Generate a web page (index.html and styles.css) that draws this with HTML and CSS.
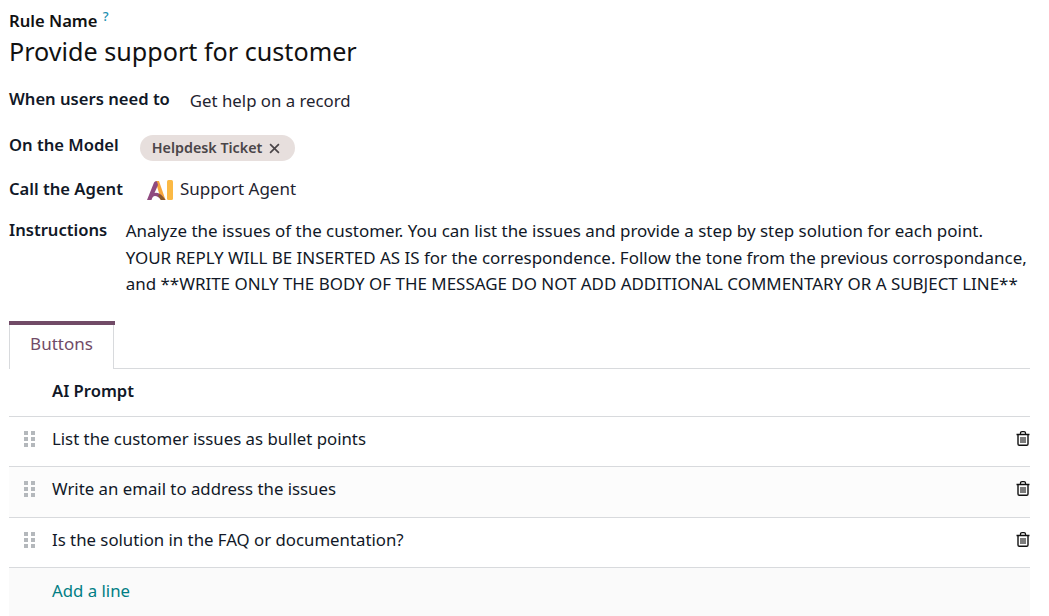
FILE: index.html
```html
<!DOCTYPE html>
<html lang="en">

<head>
    <meta charset="UTF-8">
    <title>Rule form</title>
    <link rel="stylesheet" href="styles.css">
</head>

<body>
    <div class="sheet">
        <div class="title-block">
            <label class="title-label">Rule Name <sup class="help">?</sup></label>
            <h1 class="title">Provide support for customer</h1>
        </div>

        <div class="field field-when">
            <span class="field-label">When users need to</span>
            <span class="field-value">Get help on a record</span>
        </div>

        <div class="field field-model">
            <span class="field-label">On the Model</span>
            <span class="tag">Helpdesk Ticket
                <svg class="tag-x" viewBox="0 0 10 10" width="11" height="11">
                    <path d="M1 1L9 9M9 1L1 9" stroke="#4a4548" stroke-width="1.5" fill="none" />
                </svg>
            </span>
        </div>

        <div class="field field-agent">
            <span class="field-label">Call the Agent</span>
            <span class="agent">
                <svg class="agent-logo" viewBox="0 0 26 20" width="26" height="20">
                    <path d="M8.500 1H12L18.500 20H14Z" fill="#f6a53c" />
                    <path d="M0 20L7 2.500Q8.500 0.500 10 1.500L11 5L7.500 13Q12 12 16 17L18.500 20H14Q11 16 8 16Q5.500 16 4.500 20Z" fill="#8f4a80" />
                    <path d="M12 14Q15 15 18.500 20H14Q12.500 17 11 16Z" fill="#8a5a2c" />
                    <rect x="20" y="0" width="6" height="20" rx="1.500" fill="#fbb945" />
                </svg>
                Support Agent
            </span>
        </div>

        <div class="field field-instructions">
            <span class="field-label">Instructions</span>
            <p class="instructions">Analyze the issues of the customer. You can list the issues and provide a step by step solution for each point.<br>YOUR REPLY WILL BE INSERTED AS IS for the correspondence. Follow the tone from the previous corrospondance,<br>and **WRITE ONLY THE BODY OF THE MESSAGE DO NOT ADD ADDITIONAL COMMENTARY OR A SUBJECT LINE**</p>
        </div>

        <div class="tabs">
            <div class="tab">Buttons</div>
        </div>

        <div class="table">
            <div class="row row-head">
                <span class="handle-cell"></span>
                <span class="cell">AI Prompt</span>
            </div>
            <div class="row">
                <span class="handle-cell"><i class="handle"></i></span>
                <span class="cell">List the customer issues as bullet points</span>
                <svg class="trash" viewBox="0 0 14 15" width="14" height="15"><use href="#trash-icon" /></svg>
            </div>
            <div class="row row-alt">
                <span class="handle-cell"><i class="handle"></i></span>
                <span class="cell">Write an email to address the issues</span>
                <svg class="trash" viewBox="0 0 14 15" width="14" height="15"><use href="#trash-icon" /></svg>
            </div>
            <div class="row">
                <span class="handle-cell"><i class="handle"></i></span>
                <span class="cell">Is the solution in the FAQ or documentation?</span>
                <svg class="trash" viewBox="0 0 14 15" width="14" height="15"><use href="#trash-icon" /></svg>
            </div>
            <div class="row row-add">
                <span class="handle-cell"></span>
                <a class="add-line" href="#">Add a line</a>
            </div>
        </div>
    </div>

    <svg class="defs" width="0" height="0">
        <symbol id="trash-icon" viewBox="0 0 14 15">
            <path d="M0.500 3.500H13.500M4.500 3V2Q4.500 0.700 6 0.700H8Q9.500 0.700 9.500 2V3" stroke="#111" stroke-width="1.300" fill="none" />
            <path d="M2 3.500V13Q2 14.300 3.300 14.300H10.700Q12 14.300 12 13V3.500" stroke="#111" stroke-width="1.400" fill="none" />
            <path d="M5 6V12M7 6V12M9 6V12" stroke="#111" stroke-width="1.100" fill="none" />
        </symbol>
    </svg>
</body>

</html>
```

FILE: styles.css
```css
* {
    margin: 0px;
    padding: 0px;
    box-sizing: border-box;
}

body {
    font-family: "Noto Sans", sans-serif;
    font-size: 16.8px;
    color: #111827;
    background-color: white;
    width: 1049px;
    height: 616px;
    overflow: hidden;
}

.sheet {
    padding: 10px 19px 0px 9px;
}

.title-label {
    display: block;
    font-weight: 600;
    font-size: 16.6px;
    line-height: 22px;
    color: #111;
}

.help {
    color: #1a8fb0;
    font-size: 13px;
    font-weight: 500;
    line-height: 0;
    vertical-align: 6px;
    margin-left: 1px;
}

.title {
    font-size: 25.15px;
    font-weight: 400;
    line-height: 38px;
    color: #111;
}

.field {
    display: flex;
    align-items: flex-start;
    white-space: nowrap;
}

.field-label {
    font-size: 16.6px;
    font-weight: 600;
    line-height: 22px;
    color: #111827;
}

.field-when {
    margin-top: 18px;
    gap: 20px;
}

.field-value {
    line-height: 24px;
    padding-top: 1px;
    color: #1f2430;
}

.field-model {
    margin-top: 21px;
    gap: 21px;
}

.tag {
    display: inline-flex;
    align-items: center;
    gap: 7px;
    height: 26px;
    margin-top: 1px;
    padding: 0px 15px 2px 12px;
    border-radius: 13px;
    background-color: #e7dfdd;
    color: #4a4548;
    font-size: 14.3px;
    font-weight: 600;
}

.tag-x {
    margin-top: 2px;
}

.field-agent {
    margin-top: 17px;
    gap: 24px;
}

.agent {
    display: inline-flex;
    align-items: center;
    gap: 7px;
    font-size: 17px;
    line-height: 22px;
    color: #1f2430;
}

.agent-logo {
    display: block;
    margin-top: 2px;
}

.field-instructions {
    margin-top: 19px;
    gap: 18.5px;
}

.instructions {
    font-size: 16.95px;
    line-height: 26.5px;
    margin-top: -1px;
    color: #111827;
}

.tabs {
    margin-top: 23px;
    height: 48px;
    border-bottom: 1px solid #d8dadd;
}

.tab {
    position: relative;
    width: 105px;
    height: 48px;
    padding-top: 4px;
    border-left: 1px solid #d8dadd;
    border-right: 1px solid #d8dadd;
    background-color: white;
    color: #714b67;
    font-size: 17px;
    text-align: center;
    line-height: 38px;
}

.tab::before {
    content: '';
    position: absolute;
    top: 0px;
    left: -1px;
    width: 106px;
    height: 4px;
    background-color: #714b67;
}

.row {
    display: flex;
    align-items: center;
    height: 50.5px;
    padding-bottom: 6px;
    border-bottom: 1px solid #d8dadd;
    color: #111827;
}

.row-head {
    height: 48px;
    padding-bottom: 4px;
    font-size: 16.6px;
    font-weight: 600;
}

.row-alt {
    padding-bottom: 7px;
    background-color: #fcfcfc;
}

.row-add {
    background-color: #fafafa;
    border-bottom: none;
    height: 48px;
    padding-bottom: 4px;
}

.handle-cell {
    width: 43px;
    flex-shrink: 0;
    padding-left: 15px;
}

.handle {
    display: block;
    width: 11px;
    height: 16px;
    margin-top: 2px;
    background:
        linear-gradient(#b4b8bc, #b4b8bc) 0px 0px / 4px 4px no-repeat,
        linear-gradient(#b4b8bc, #b4b8bc) 7px 0px / 4px 4px no-repeat,
        linear-gradient(#b4b8bc, #b4b8bc) 0px 6px / 4px 4px no-repeat,
        linear-gradient(#b4b8bc, #b4b8bc) 7px 6px / 4px 4px no-repeat,
        linear-gradient(#b4b8bc, #b4b8bc) 0px 12px / 4px 4px no-repeat,
        linear-gradient(#b4b8bc, #b4b8bc) 7px 12px / 4px 4px no-repeat;
}

.cell {
    flex: 1;
}

.trash {
    flex-shrink: 0;
}

.add-line {
    color: #017e84;
    text-decoration: none;
}

.defs {
    position: absolute;
}
```
